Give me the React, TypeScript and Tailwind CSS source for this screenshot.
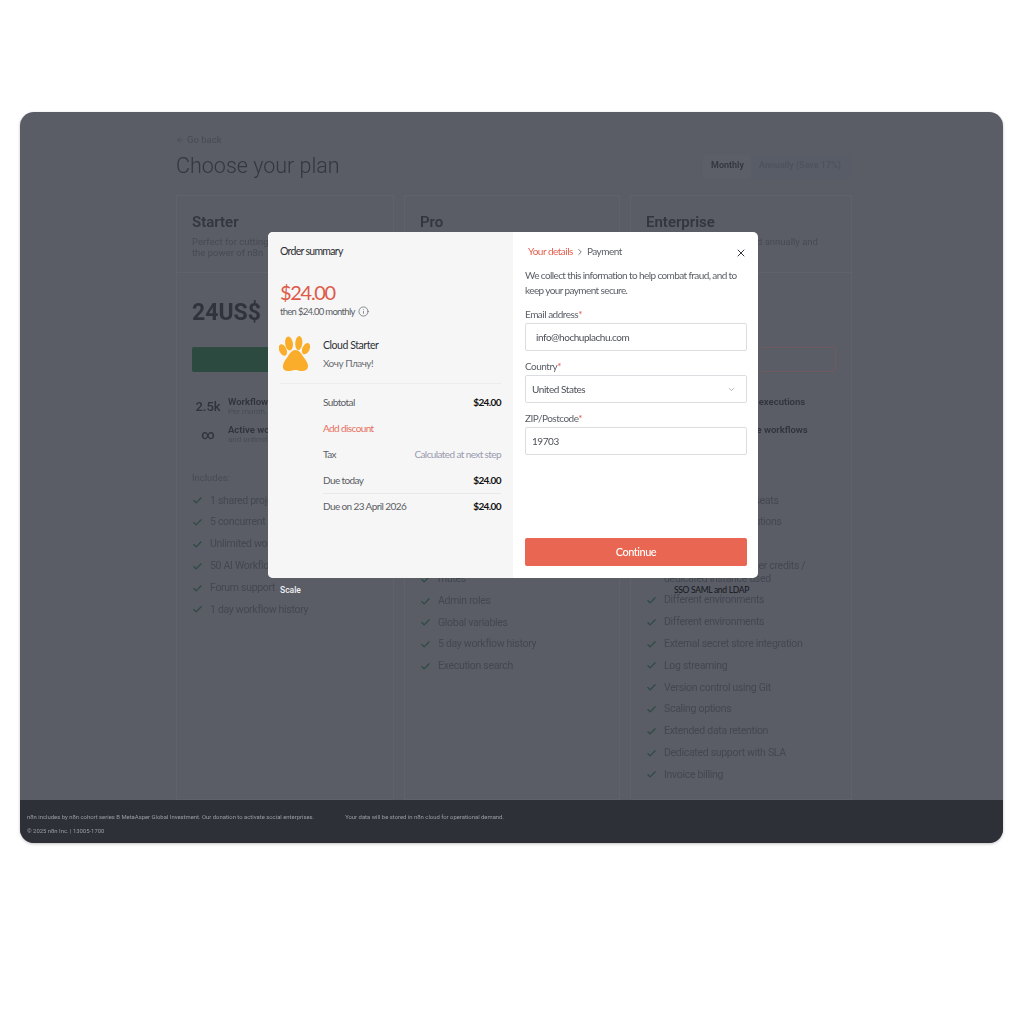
import React from "react";
import { Check, X, ChevronDown, ChevronRight, Info, ArrowLeft } from "lucide-react";

const lato = "[font-family:Lato,sans-serif]";

function Feature({ text }: { text: string }) {
  return (
    <li className="flex items-start gap-[7px] text-[10.5px] leading-[12.5px] tracking-[-0.3px] text-[#44474f]">
      <span className="flex h-[21.8px] w-[11px] shrink-0 items-center">
        <Check className="h-[11px] w-[11px] text-[#2b4a42]" strokeWidth={2.5} />
      </span>
      <span className="whitespace-pre pb-[4.6px] pt-[4.7px]">{text}</span>
    </li>
  );
}

function Stat({ lead, title, sub }: { lead: string; title: string; sub: string }) {
  return (
    <div className="flex h-[28px] items-center">
      <span className="w-[36px] shrink-0 pr-[4px] text-center text-[13px] font-medium leading-none text-[#30333c]">{lead}</span>
      <div className="whitespace-nowrap">
        <div className="text-[9.5px] font-semibold leading-[11px] text-[#30333c]">{title}</div>
        <div className="h-[10px] text-[8px] leading-[10px] text-[#494c55]">{sub}</div>
      </div>
    </div>
  );
}

function PlanCard({
  name, desc, price, button, stats, label, features, listClass,
}: {
  name: string; desc: React.ReactNode; price: string; button: string;
  stats: { lead: string; title: string; sub: string }[]; label: string; features: string[]; listClass: string;
}) {
  return (
    <div className="flex flex-col border border-[#5f6269]">
      <div className="h-[77px] border-b border-[#5f6269] px-[15px] pt-[16px]">
        <h2 className="text-[15px] font-semibold leading-[20px] text-[#33363f]">{name}</h2>
        <p className="mt-[4px] whitespace-nowrap text-[9.5px] leading-[11px] text-[#474a53]">{desc}</p>
      </div>
      <div className="px-[15px]">
        <div className="flex h-[74px] items-center pt-[7px] text-[23px] font-bold text-[#30333c]">{price}</div>
        {button === "green" ? (
          <div className="h-[25px] rounded-[2px] bg-[#2c4a40]" />
        ) : (
          <div className="h-[25px] rounded-[2px] border border-[#6f5a60]" />
        )}
        <div className="mt-[20px] flex flex-col">
          {stats.map((s) => <Stat key={s.title} {...s} />)}
        </div>
        <div className="mt-[24px] h-[12px] text-[9.5px] leading-[12px] text-[#474a53]">{label}</div>
        <ul className={`flex flex-col ${listClass}`}>
          {features.map((f, i) => <Feature key={i} text={f} />)}
        </ul>
      </div>
    </div>
  );
}

function SummaryRow({ label, value, labelClass, valueClass }: { label: string; value?: string; labelClass?: string; valueClass?: string }) {
  return (
    <div className="flex h-[26px] items-center justify-between text-[10px] tracking-[-0.6px]">
      <span className={labelClass ?? "text-[#5b5e65]"}>{label}</span>
      {value && <span className={valueClass ?? "font-bold text-[#111]"}>{value}</span>}
    </div>
  );
}

function Field({ label, value, select, inputClass }: { label: string; value: string; select?: boolean; inputClass: string }) {
  return (
    <div>
      <div className="text-[10px] leading-[13px] tracking-[-0.5px] text-[#5b5e65]">
        {label}<span className="text-[#e0574a]">*</span>
      </div>
      <div className={`mt-[2px] flex h-[28px] items-center justify-between rounded-[2px] border border-[#dcdde0] bg-white pr-[10px] text-[10px] tracking-[-0.45px] text-[#4d5058] ${inputClass}`}>
        <span>{value}</span>
        {select && <ChevronDown className="h-[9px] w-[9px] text-[#9a9ca3]" />}
      </div>
    </div>
  );
}

export default function App() {
  return (
    <div className="min-h-[1024px] bg-white pb-[181px] pl-[20px] pr-[21px] pt-[112px] font-[Roboto,sans-serif]">
      <div className="relative h-[731px] overflow-hidden rounded-[14px] bg-[#5a5d66] shadow-[0_1px_3px_rgba(0,0,0,0.25)]">
        <div className="flex h-[688px] flex-col overflow-hidden pl-[156px] pr-[151px] pt-[21px] blur-[0.5px]">
          <div className="flex items-center gap-[3px] text-[9.5px] leading-[14px] text-[#474a53]">
            <ArrowLeft className="h-[8px] w-[8px]" />Go back
          </div>
          <div className="mt-[3px] flex items-center justify-between">
            <h1 className="text-[21.5px] font-light leading-[32px] text-[#33363f]">Choose your plan</h1>
            <div className="mr-[1px] flex h-[23px] w-[148px] items-center rounded-[2px] bg-[#575c67] text-[9px]">
              <span className="flex h-full w-[48px] items-center rounded-[2px] bg-[#5c5f68] pl-[8px] font-semibold text-[#33363f]">Monthly</span>
              <span className="whitespace-nowrap pl-[8px] font-medium text-[#4d525d]">Annually (Save 17%)</span>
            </div>
          </div>
          <div className="mt-[13px] grid grow grid-cols-[218px_216px_222px] gap-[10px]">
            <PlanCard
              name="Starter"
              desc={<>Perfect for cutting through the noise with<br />the power of n8n</>}
              price="24US$"
              button="green"
              stats={[
                { lead: "2.5k", title: "Workflow executions", sub: "Per month, included" },
                { lead: "∞", title: "Active workflows", sub: "and unlimited test ones" },
              ]}
              label="Includes:"
              listClass="mt-[6px]"
              features={["1 shared project", "5 concurrent executions", "Unlimited workflows", "50 AI Workflow Builder", "Forum support", "1 day workflow history"]}
            />
            <PlanCard
              name="Pro"
              desc={<>For teams that need more<br />&nbsp;</>}
              price="60US$"
              button="green"
              stats={[
                { lead: "10k", title: "Workflow executions", sub: "Per month" },
                { lead: "∞", title: "Active workflows", sub: "and unlimited test ones" },
              ]}
              label="Includes:"
              listClass="mt-[19px]"
              features={["3 shared projects", "20 concurrent executions", "150 AI Workflow credits", "mutes", "Admin roles", "Global variables", "5 day workflow history", "Execution search"]}
            />
            <PlanCard
              name="Enterprise"
              desc={<>For larger companies, billed annually and<br />&nbsp;</>}
              price=""
              button="outline"
              stats={[
                { lead: "", title: "Custom workflow executions", sub: "" },
                { lead: "", title: "Unlimited instance workflows", sub: "" },
              ]}
              label=""
              listClass="mt-[6px]"
              features={["Unlimited team user seats", "Unlimited team institutions", "Unlimited", "2000 AI Workflow other credits /\ndedicated instance used", "Different environments", "Different environments", "External secret store integration", "Log streaming", "Version control using Git", "Scaling options", "Extended data retention", "Dedicated support with SLA", "Invoice billing"]}
            />
          </div>
        </div>

        <div className="flex h-[43px] flex-col justify-center gap-[5px] bg-[#2e3038] pl-[7px] pt-[6px] text-[5.9px] leading-[9px] text-[#9b9da4] blur-[0.3px]">
          <div className="flex gap-[31px]">
            <span>n8n includes by n8n cohort series B MetaAsper Global Investment. Our donation to activate social enterprises.</span>
            <span>Your data will be stored in n8n cloud for operational demand.</span>
          </div>
          <div>© 2025 n8n Inc. | 13005-1700</div>
        </div>

        <span className="absolute left-[260px] top-[472px] text-[8.5px] font-medium text-[#f0f0f2]">Scale</span>
        <span className={`absolute left-[654px] top-[472px] text-[8.5px] tracking-[-0.3px] text-[#15171c] ${lato}`}>SSO SAML and LDAP</span>

        <div className={`absolute left-[248px] top-[120px] flex h-[346px] w-[490px] overflow-hidden rounded-[5px] bg-white blur-[0.25px] ${lato}`}>
          <div className="w-[245px] bg-[#f6f6f6] px-[12px] pt-[12px]">
            <div className="text-[10.5px] leading-[14px] tracking-[-0.7px] text-[#2a2c31]">Order summary</div>
            <div className="mt-[21px] text-[20px] leading-[26px] tracking-[-1.3px] text-[#dd5a48]">$24.00</div>
            <div className="flex items-center gap-[3px] text-[9.5px] leading-[13px] tracking-[-0.7px] text-[#5b5e65]">
              then $24.00 monthly <Info className="h-[11px] w-[11px]" strokeWidth={1.5} />
            </div>
            <div className="ml-[-1px] mt-[15px] flex h-[42px] items-center">
              <svg viewBox="0 0 32 36" className="h-[36px] w-[32px] shrink-0" fill="#f9ad2a">
                <ellipse cx="3.900" cy="14" rx="3.600" ry="6" transform="rotate(-25 3.900 14)" />
                <ellipse cx="10" cy="7.500" rx="3.900" ry="7" transform="rotate(-8 10 7.500)" />
                <ellipse cx="19.800" cy="7" rx="3.500" ry="7" transform="rotate(5 19.800 7)" />
                <ellipse cx="27" cy="12.700" rx="3.600" ry="6" transform="rotate(25 27 12.700)" />
                <path d="M16.500 14c3.500 0 5.500 3 8 7 3 4 5 7 4.500 10-.5 3-3.500 4.500-7 4-3-.5-4-1-5.500-1s-3 .5-6 1c-3.500.5-6.500-1-6.500-4-.5-3 1.500-6 4.500-10 2.500-4 4.500-7 8-7z" />
              </svg>
              <div className="ml-[12px]">
                <div className="text-[10.5px] leading-[14px] tracking-[-0.45px] text-[#2f3136]">Cloud Starter</div>
                <div className="mt-[4px] text-[10px] leading-[14px] tracking-[-0.5px] text-[#6b6e75]">Хочу Плачу!</div>
              </div>
            </div>
            <div className="mt-[8px] border-t border-[#ececee] pl-[43px] pt-[5px]">
              <SummaryRow label="Subtotal" value="$24.00" />
              <SummaryRow label="Add discount" labelClass="text-[#e8705f]" />
              <SummaryRow label="Tax" value="Calculated at next step" valueClass="text-[#9a9bb0]" />
              <div className="-mb-px border-b border-[#e9e9eb]"><SummaryRow label="Due today" value="$24.00" /></div>
              <SummaryRow label="Due on 23 April 2026" value="$24.00" />
            </div>
          </div>

          <div className="relative flex w-[245px] flex-col pb-[12px] pl-[12px] pr-[11px] pt-[12px]">
            <div className="flex h-[15px] items-center pl-[3px] text-[10px] tracking-[-0.5px]">
              <span className="text-[#e4604f]">Your details</span>
              <ChevronRight className="mx-[2px] h-[10px] w-[10px] text-[#5b5e65]" />
              <span className="text-[#5b5e65]">Payment</span>
            </div>
            <p className="mt-[9px] text-[10px] leading-[15px] tracking-[-0.6px] text-[#5b5e65]">
              We collect this information to help combat fraud, and to keep your payment secure.
            </p>
            <div className="mt-[10px] flex flex-col gap-[9px]">
              <Field label="Email address" value="info@hochuplachu.com" inputClass="pl-[10px]" />
              <Field label="Country" value="United States" select inputClass="pl-[6px]" />
              <Field label="ZIP/Postcode" value="19703" inputClass="pl-[6px]" />
            </div>
            <div className="mt-auto flex h-[28px] items-center justify-center rounded-[2px] bg-[#e96652] text-[11px] font-medium tracking-[-0.5px] text-white">
              Continue
            </div>
            <X className="absolute right-[11px] top-[15px] h-[12px] w-[12px] text-[#33353a]" strokeWidth={2} />
          </div>
        </div>
      </div>
    </div>
  );
}
